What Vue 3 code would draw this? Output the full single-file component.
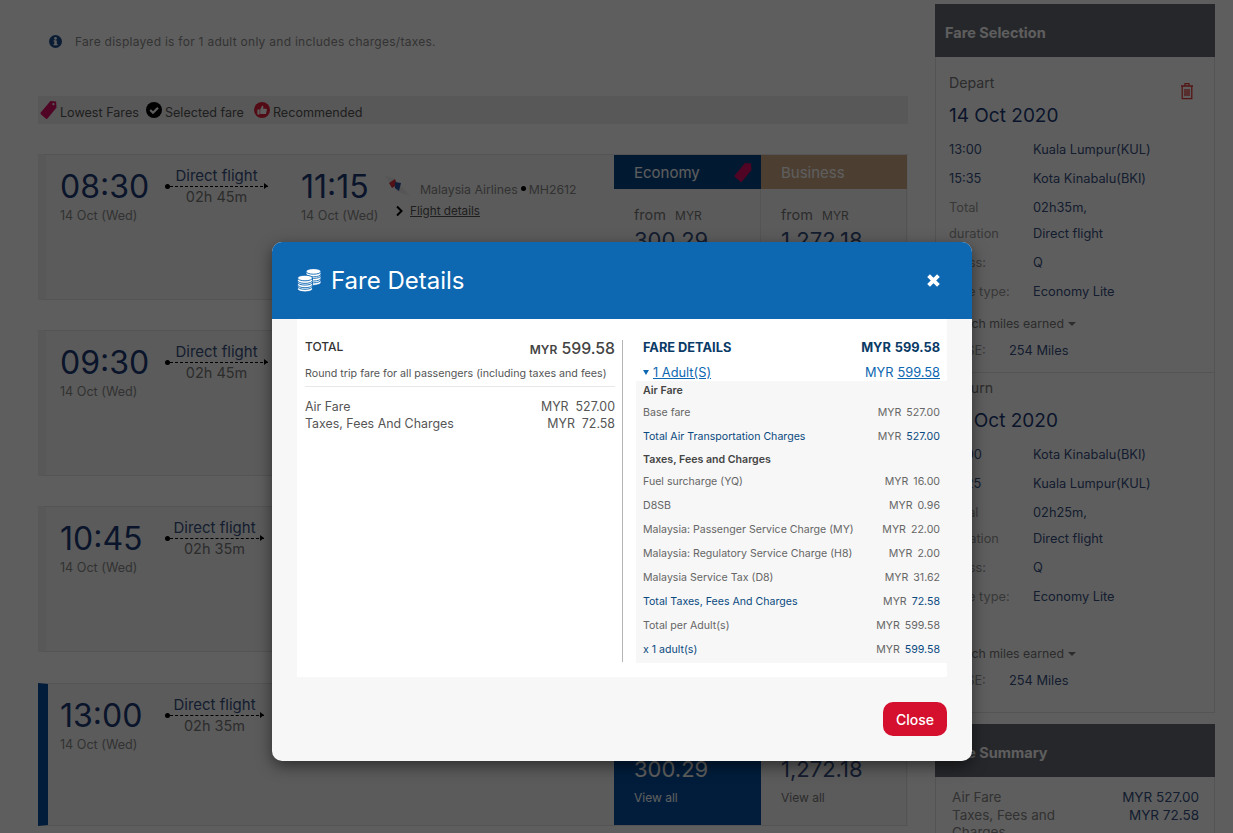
<template>
  <div class="page">
    <div class="main">
      <p class="notice">
        <svg class="info-icon" viewBox="0 0 16 16"><circle cx="8" cy="8" r="8" fill="#1d4f8f" /><rect x="6.6" y="6.8" width="3" height="5.6" fill="#fff" /><rect x="5.6" y="11" width="5" height="1.6" fill="#fff" /><rect x="5.6" y="6.6" width="3" height="1.4" fill="#fff" /><circle cx="8" cy="4.2" r="1.6" fill="#fff" /></svg>
        Fare displayed is for 1 adult only and includes charges/taxes.
      </p>

      <div class="legend">
        <span class="legend-item">
          <svg class="tag-icon" viewBox="0 0 18 20"><path d="M11 1l6 0.5 0.5 6.5-9.5 11.5q-1 1-2 0l-5-4.5q-1-1 0-2z" fill="#d6105f" /><circle cx="14.2" cy="4.4" r="1.2" fill="#eee" /></svg>
          Lowest Fares
        </span>
        <span class="legend-item selected-item">
          <svg class="round-icon" viewBox="0 0 16 16"><circle cx="8" cy="8" r="8" fill="#000" /><path d="M4.2 8l2.8 2.8 5-5" fill="none" stroke="#fff" stroke-width="2.2" /></svg>
          Selected fare
        </span>
        <span class="legend-item recommended-item">
          <svg class="round-icon" viewBox="0 0 16 16"><circle cx="8" cy="8" r="8" fill="#e0203a" /><path d="M3.4 7.4h2.2v5h-2.2zM6.2 7.4l2-3.8q1.4 0 1.2 1.6l-.3 1.6h3q1 0 .8 1l-.8 3.6q-.2.6-.8.6H6.2z" fill="#fff" /></svg>
          Recommended
        </span>
      </div>

      <div v-for="f in flights" :key="f.depart" class="card" :class="{ selected: f.selected }">
        <div class="flight">
          <div class="time-cell">
            <div class="time">{{ f.depart }}</div>
            <div class="date">14 Oct (Wed)</div>
          </div>
          <div class="route" :class="{ short: f.short }">
            <span class="route-type">Direct flight</span>
            <span class="route-line"></span>
            <span class="route-time">{{ f.duration }}</span>
          </div>
          <div class="arrive-cell">
            <div class="time">{{ f.arrive }}</div>
            <div class="date">14 Oct (Wed)</div>
          </div>
          <div class="airline">
            <div class="airline-name">
              <svg class="mh-logo" viewBox="0 0 28 22"><path d="M1 1l9 2 16 18-12-4-8-8z" fill="#e8e8ec" /><path d="M5 8l6-4 2 6-5 3z" fill="#d8323c" /><path d="M11 7l6 1-2 8-4-3z" fill="#2a4f9a" /></svg>
              Malaysia Airlines<i class="dot"></i>MH2612
            </div>
            <div class="details-link">
              <svg class="chev" viewBox="0 0 8 12"><path d="M2 1.5L6.5 6 2 10.5" fill="none" stroke="#000" stroke-width="2" /></svg>
              <u>Flight details</u>
            </div>
          </div>
        </div>
        <div class="fares">
          <div class="fare-col" :class="{ chosen: f.selected }">
            <div class="fare-head economy">
              Economy
              <svg v-if="f.lowest" class="head-tag" viewBox="0 0 18 20"><path d="M11 1l6 0.5 0.5 6.5-9.5 11.5q-1 1-2 0l-5-4.5q-1-1 0-2z" fill="#d6105f" /></svg>
            </div>
            <div class="from">from <small>MYR</small></div>
            <div class="price">300.29</div>
            <div class="view-all">View all</div>
          </div>
          <div class="fare-col">
            <div class="fare-head business">Business</div>
            <div class="from">from <small>MYR</small></div>
            <div class="price">1,272.18</div>
            <div class="view-all">View all</div>
          </div>
        </div>
      </div>
    </div>

    <aside class="side">
      <h3 class="side-title">Fare Selection</h3>
      <div class="side-box">
        <section v-for="(s, i) in segments" :key="s.label" class="segment" :class="{ second: i === 1 }">
          <div class="seg-label">{{ s.label }}</div>
          <svg v-if="i === 0" class="trash" viewBox="0 0 14 18"><path d="M1 4h12M5 4V1.6h4V4M2.2 4v12.6h9.6V4M5 7v7M7 7v7M9 7v7" fill="none" stroke="#e53a3a" stroke-width="1.3" /></svg>
          <div class="seg-date">{{ s.date }}</div>
          <div class="seg-row"><span class="dark">{{ s.from[0] }}</span><b>{{ s.from[1] }}</b></div>
          <div class="seg-row"><span class="dark">{{ s.to[0] }}</span><b>{{ s.to[1] }}</b></div>
          <div class="seg-row"><span>Total</span><b>{{ s.total }}</b></div>
          <div class="seg-row tight"><span>duration</span><b>Direct flight</b></div>
          <div class="seg-row"><span>Class:</span><b>Q</b></div>
          <div class="seg-row"><span>Fare type:</span><b>Economy Lite</b></div>
          <div class="miles-head" :class="{ lower: i === 1 }">Enrich miles earned <i class="caret"></i></div>
          <div class="seg-row base"><span>BASE:</span><b>254 Miles</b></div>
        </section>
      </div>
      <h3 class="side-title summary-title">Fare Summary</h3>
      <div class="side-box summary-box">
        <div class="sum-row"><span>Air Fare</span><b>MYR 527.00</b></div>
        <div class="sum-row"><span>Taxes, Fees and Charges</span><b>MYR 72.58</b></div>
      </div>
    </aside>

    <div class="overlay"></div>

    <div class="modal">
      <header class="modal-head">
        <svg class="coins" viewBox="0 0 25 24">
          <path v-for="(d, i) in coinPaths" :key="i" :d="d" fill="#fff" stroke="#0d67b1" stroke-width="0.9" />
        </svg>
        <h2>Fare Details</h2>
        <svg class="close-x" viewBox="0 0 14 14"><path d="M2.4 2.4l9.2 9.2M11.6 2.4l-9.2 9.2" stroke="#fff" stroke-width="3.6" /></svg>
      </header>

      <div class="modal-body">
        <div class="col-left">
          <div class="total-row">
            <span class="total-label">TOTAL</span>
            <span class="total-value"><small>MYR</small> 599.58</span>
          </div>
          <p class="total-note">Round trip fare for all passengers (including taxes and fees)</p>
          <div class="line-item"><span>Air Fare</span><span>MYR&nbsp; 527.00</span></div>
          <div class="line-item"><span>Taxes, Fees And Charges</span><span>MYR&nbsp; 72.58</span></div>
        </div>

        <div class="col-right">
          <div class="details-top">
            <div class="details-title"><span>FARE DETAILS</span><span><span class="cur">MYR</span>599.58</span></div>
            <div class="adult-row">
              <span><i class="adult-caret"></i><u>1 Adult(S)</u></span>
              <span><span class="cur">MYR</span><u>599.58</u></span>
            </div>
          </div>
          <div class="breakdown">
            <template v-for="r in breakdown" :key="r.name">
              <div v-if="r.head" class="b-head" :class="{ first: r.first }">{{ r.name }}</div>
              <div v-else class="b-row" :class="{ strong: r.strong }">
                <span class="b-name">{{ r.name }}</span>
                <span class="b-val"><small>MYR</small>{{ r.value }}</span>
              </div>
            </template>
          </div>
        </div>
      </div>

      <footer class="modal-foot">
        <button class="close-btn">Close</button>
      </footer>
    </div>
  </div>
</template>

<script setup>
const flights = [
  { depart: '08:30', arrive: '11:15', duration: '02h 45m', lowest: true },
  { depart: '09:30', arrive: '12:15', duration: '02h 45m' },
  { depart: '10:45', arrive: '13:20', duration: '02h 35m', short: true },
  { depart: '13:00', arrive: '15:35', duration: '02h 35m', short: true, selected: true }
]

const segments = [
  { label: 'Depart', date: '14 Oct 2020', from: ['13:00', 'Kuala Lumpur(KUL)'], to: ['15:35', 'Kota Kinabalu(BKI)'], total: '02h35m,' },
  { label: 'Return', date: '18 Oct 2020', from: ['13:00', 'Kota Kinabalu(BKI)'], to: ['15:25', 'Kuala Lumpur(KUL)'], total: '02h25m,' }
]

const breakdown = [
  { name: 'Air Fare', head: true, first: true },
  { name: 'Base fare', value: '527.00' },
  { name: 'Total Air Transportation Charges', value: '527.00', strong: true },
  { name: 'Taxes, Fees and Charges', head: true },
  { name: 'Fuel surcharge (YQ)', value: '16.00' },
  { name: 'D8SB', value: '0.96' },
  { name: 'Malaysia: Passenger Service Charge (MY)', value: '22.00' },
  { name: 'Malaysia: Regulatory Service Charge (H8)', value: '2.00' },
  { name: 'Malaysia Service Tax (D8)', value: '31.62' },
  { name: 'Total Taxes, Fees And Charges', value: '72.58', strong: true },
  { name: 'Total per Adult(s)', value: '599.58' },
  { name: 'x 1 adult(s)', value: '599.58', strong: true }
]

// one coin: a short cylinder, drawn bottom to top so the stacks overlap
const coin = (cx, y, r) =>
  `M${cx - r} ${y}v2.6a${r} 2.8 0 0 0 ${2 * r} 0v-2.6a${r} 2.8 0 0 0 ${-2 * r} 0z` +
  `M${cx - r} ${y}a${r} 2.8 0 0 0 ${2 * r} 0`

const coinPaths = [
  coin(16.5, 11, 7.5), coin(16.5, 6.6, 7.5), coin(16.5, 2.4, 7.5),
  coin(8, 17.5, 7.5), coin(8, 13.3, 7.5), coin(8, 9, 7.5)
]
</script>

<style>
html, body { height: 100%; overflow: hidden; }
</style>

<style scoped>
.page { position: relative; width: 1233px; height: 833px; overflow: hidden; display: flex; background: #fff; font-family: Inter, "Noto Sans", sans-serif; color: #555; }
.main { width: 870px; margin-left: 38px; padding-top: 33px; }
.notice { display: flex; align-items: center; margin: 0 0 47px 11px; height: 16px; font-size: 12px; letter-spacing: 0.27px; color: #8c8c8c; }
.info-icon { width: 13px; height: 13px; margin-right: 13px; }
.legend { display: flex; height: 28px; padding-top: 5px; box-sizing: border-box; background: #eee; margin-bottom: 30px; font-size: 12.6px; color: #555; }
.legend-item { display: flex; align-items: center; padding-left: 2px; }
.selected-item { margin-left: 5px; }
.recommended-item { margin-left: 8px; }
.tag-icon { width: 17px; height: 19px; margin: -6px 3px 0 0; }
.round-icon { width: 16px; height: 16px; margin: -5px 3px 0 0; }

.card { display: flex; height: 146px; margin-bottom: 30px; background: #f7f7f7; border: 1px solid #e4e4e4; border-left: 8px solid #eee; border-right: 0; box-sizing: border-box; }
.card.selected { height: 143px; margin-top: 31px; border-left: 10px solid #05509f; }
.flight { width: 568px; padding: 14px 0 0 14px; display: flex; align-items: flex-start; box-sizing: border-box; }
.selected .flight { width: 566px; padding-left: 12px; }
.time-cell { width: 105px; }
.arrive-cell { width: 87px; margin-left: 33px; }
.time { font-size: 32px; line-height: 36px; color: #1c3a75; }
.date { font-size: 12.6px; line-height: 15px; margin-top: 3px; color: #888; white-space: nowrap; }
.route { width: 103px; display: flex; flex-direction: column; align-items: center; }
.route.short { width: 99px; }
.route-type { font-size: 15px; line-height: 16px; color: #36507f; margin-top: -1px; }
.route-line { position: relative; width: 100%; border-top: 1px dashed #000; margin-top: 2px; }
.route-line::before { content: ""; position: absolute; left: 0; top: -3px; width: 5px; height: 5px; border-radius: 50%; background: #000; }
.route-line::after { content: ""; position: absolute; right: 0; top: -4px; border-left: 4px solid #000; border-top: 3px solid transparent; border-bottom: 3px solid transparent; }
.route-time { font-size: 14.5px; line-height: 16px; margin-top: 2px; color: #777; }
.airline { padding-top: 13px; }
.airline-name { display: flex; align-items: center; font-size: 12.3px; color: #888; }
.mh-logo { width: 28px; height: 22px; margin: -8px 8px 0 -4px; }
.dot { width: 5px; height: 5px; border-radius: 50%; background: #000; margin: -3px 3px 0 3px; }
.details-link { display: flex; align-items: center; font-size: 11.7px; margin: 7px 0 0 7px; color: #555; }
.chev { width: 8px; height: 12px; margin-right: 7px; }
.fares { display: flex; }
.fare-col { width: 147px; padding: 0 20px; box-sizing: border-box; border-right: 1px solid #e4e4e4; }
.fare-col + .fare-col { width: 146px; }
.fare-col.chosen { background: #05509f; color: #fff; border-right-color: #05509f; }
.fare-col.chosen .price, .fare-col.chosen .view-all, .fare-col.chosen .from { color: #fff; }
.fare-head { display: flex; align-items: center; justify-content: space-between; height: 34px; margin: 0 -21px 0 -20px; padding: 0 9px 0 20px; font-size: 15px; color: #fff; }
.economy { background: #084587; }
.business { background: #cdaa87; }
.head-tag { width: 18px; height: 20px; }
.from { margin-top: 17px; font-size: 14.5px; line-height: 18px; color: #777; }
.from small { font-size: 12px; margin-left: 5px; }
.price { font-size: 22px; line-height: 28px; margin-top: 1px; color: #36507f; }
.view-all { font-size: 12px; margin-top: 7px; color: #777; }

.side { width: 280px; margin: 4px 0 0 27px; }
.side-title { margin: 0; height: 53px; box-sizing: border-box; padding: 21px 10px 0; font-size: 14.5px; line-height: 16px; background: #676a74; color: #fff; }
.side-box { border: 1px solid #e4e4e4; border-top: 0; padding: 0 13px; font-size: 12px; height: 656px; box-sizing: border-box; color: #888; }
.segment { position: relative; height: 316px; box-sizing: border-box; padding: 18px 13px 0; margin: 0 -13px; border-bottom: 1px solid #e4e4e4; }
.segment.second { border: 0; height: 339px; padding-top: 7px; }
.seg-label { font-size: 14.2px; line-height: 16px; color: #777; }
.trash { position: absolute; right: 20px; top: 25px; width: 14px; height: 18px; }
.seg-date { font-size: 19px; line-height: 24px; margin: 13px 0 7px; color: #1c3a75; }
.seg-row { display: flex; height: 29px; line-height: 29px; font-size: 12.8px; }
.seg-row.tight { height: 26px; line-height: 24px; }
.seg-row span { width: 84px; color: #999; }
.seg-row span.dark { color: #36507f; }
.seg-row b { font-weight: 400; color: #36507f; }
.miles-head { margin-top: 10px; font-size: 12.3px; line-height: 16px; color: #777; }
.miles-head.lower { margin-top: 35px; }
.caret { display: inline-block; border-top: 4px solid #777; border-left: 4px solid transparent; border-right: 4px solid transparent; vertical-align: 2px; }
.base { margin-top: 4px; }
.base span { width: 60px; }
.summary-title { margin-top: 11px; }
.summary-box { height: 60px; padding: 12px 15px 0 16px; font-size: 13.5px; }
.sum-row { display: flex; justify-content: space-between; line-height: 17.5px; color: #888; }
.sum-row span { width: 125px; }
.sum-row b { font-weight: 400; color: #36507f; }

.overlay { position: absolute; inset: 0; background: rgba(0, 0, 0, 0.63); }

.modal { position: absolute; left: 272px; top: 242px; width: 700px; height: 519px; border-radius: 10px; background: #f7f7f7; box-shadow: 0 5px 15px rgba(0, 0, 0, 0.5); overflow: hidden; }
.modal-head { display: flex; align-items: center; height: 77px; padding: 0 31px 0 25px; background: #0d67b1; color: #fff; }
.coins { width: 25px; height: 24px; margin-right: 9px; }
.modal-head h2 { margin: 0; font-size: 24px; font-weight: 400; flex: 1; }
.close-x { width: 15px; height: 15px; }
.modal-body { display: flex; width: 650px; height: 358px; margin-left: 25px; padding: 21px 0 15px 8px; box-sizing: border-box; background: #fff; }
.col-left { width: 318px; height: 322px; padding-right: 7px; box-sizing: border-box; border-right: 1px solid #b4b4b4; font-size: 12.4px; color: #555; }
.total-row { display: flex; justify-content: space-between; align-items: center; height: 16px; }
.total-label { font-size: 12px; font-weight: 500; color: #333; margin-top: -3px; }
.total-value { font-size: 15.8px; font-weight: 500; color: #444; }
.total-value small { font-size: 12px; font-weight: 600; }
.total-note { margin: 10px 0 0; padding-bottom: 4px; border-bottom: 1px solid #e8e8e8; font-size: 10.7px; line-height: 16px; color: #555; }
.line-item { display: flex; justify-content: space-between; line-height: 17px; }
.total-note + .line-item { margin-top: 11px; }
.col-right { width: 311px; margin-left: 13px; }
.details-top { padding: 0 7px; height: 41px; }
.details-title { display: flex; justify-content: space-between; font-size: 12.8px; font-weight: 700; line-height: 16px; color: #0a3a66; }
.cur { margin-right: 4px; }
.adult-row { display: flex; justify-content: space-between; margin-top: 9px; font-size: 12.8px; line-height: 16px; color: #0d67b1; }
.adult-caret { display: inline-block; border-top: 5px solid #0d67b1; border-left: 3.5px solid transparent; border-right: 3.5px solid transparent; margin-right: 4px; vertical-align: 2px; }
.breakdown { height: 282px; padding: 0 7px; background: #f7f7f7; font-size: 10.6px; color: #666; }
.b-head { height: 21px; line-height: 21px; font-weight: 600; color: #444; }
.b-head.first { height: 20px; line-height: 20px; }
.b-row { display: flex; justify-content: space-between; height: 24px; line-height: 24px; }
.b-row.strong .b-name, .b-row.strong .b-val { color: #0a4a80; }
.b-val small { font-size: 10.6px; color: #666; margin-right: 5px; }
.modal-foot { display: flex; justify-content: flex-end; padding: 25px 25px 0 0; }
.close-btn { width: 64px; height: 34px; padding: 0; border: 0; border-radius: 10px; background: #d5102f; color: #fff; font: 500 14px Inter, "Noto Sans", sans-serif; }
</style>
